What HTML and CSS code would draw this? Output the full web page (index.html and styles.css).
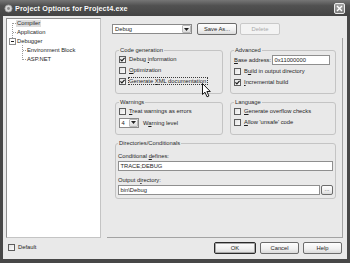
FILE: index.html
```html
<!DOCTYPE html>
<html>
<head>
<meta charset="utf-8">
<title>Project Options for Project4.exe</title>
<link rel="stylesheet" href="styles.css">
</head>
<body>
<div class="window">
  <div class="titlebar">
    <svg class="app-icon" width="9" height="9" viewBox="0 0 9 9"><circle cx="4.5" cy="4.5" r="3.6" fill="#d6d6d6" stroke="#9a9a9a" stroke-width="0.8"/><circle cx="4.5" cy="4.5" r="1.4" fill="#8a8a8a"/></svg>
    <span class="title">Project Options for Project4.exe</span>
    <div class="close"><svg width="7" height="7" viewBox="0 0 7 7"><path d="M1 1 L6 6 M6 1 L1 6" stroke="#fff" stroke-width="1.4"/></svg></div>
  </div>
  <div class="client">
    <div class="main">
      <div class="tree">
        <div class="tree-body">
          <svg class="tree-lines" width="30" height="45" viewBox="0 0 30 45" shape-rendering="crispEdges">
            <g stroke="#9c9c9c" stroke-width="1" stroke-dasharray="1 1" fill="none">
              <line x1="5.5" y1="4" x2="5.5" y2="19"/>
              <line x1="6" y1="4.5" x2="10" y2="4.5"/>
              <line x1="6" y1="13.5" x2="10" y2="13.5"/>
              <line x1="15.5" y1="26" x2="15.5" y2="41"/>
              <line x1="16" y1="31.5" x2="20" y2="31.5"/>
              <line x1="16" y1="40.5" x2="20" y2="40.5"/>
            </g>
            <rect x="2.5" y="19.5" width="6" height="6" fill="#fff" stroke="#8c8c8c"/>
            <line x1="4" y1="22.5" x2="7" y2="22.5" stroke="#222"/>
          </svg>
          <div class="tree-items">
            <div class="node"><span class="lbl sel">Compiler</span></div>
            <div class="node"><span class="lbl">Application</span></div>
            <div class="node"><span class="lbl">Debugger</span></div>
            <div class="node child"><span class="lbl">Environment Block</span></div>
            <div class="node child"><span class="lbl">ASP.NET</span></div>
          </div>
        </div>
      </div>
      <div class="right">
        <div class="toolbar">
          <div class="combo config"><span class="combo-text">Debug</span><span class="drop"><svg width="5" height="3" viewBox="0 0 5 3"><path d="M0 0 H5 L2.5 3 Z" fill="#222"/></svg></span></div>
          <button class="btn save">Save As...</button>
          <button class="btn delete" disabled>Delete</button>
        </div>
        <div class="panel">
          <div class="groups">
            <fieldset class="group codegen">
              <legend>Code generation</legend>
              <div class="chk-row"><span class="chk on"><svg width="5" height="5" viewBox="0 0 5 5"><path d="M0.4 2.4 L1.9 3.9 L4.6 0.8" stroke="#1a1a1a" stroke-width="1.2" fill="none"/></svg></span><span>Debug <u>i</u>nformation</span></div>
              <div class="chk-row"><span class="chk"></span><span><u>O</u>ptimization</span></div>
              <div class="chk-row"><span class="chk on"><svg width="5" height="5" viewBox="0 0 5 5"><path d="M0.4 2.4 L1.9 3.9 L4.6 0.8" stroke="#1a1a1a" stroke-width="1.2" fill="none"/></svg></span><span class="focus">Generate <u>X</u>ML documentation</span></div>
            </fieldset>
            <fieldset class="group advanced">
              <legend>Advanced</legend>
              <div class="field-row"><span><u>B</u>ase address:</span><span class="textbox base">0x11000000</span></div>
              <div class="chk-row"><span class="chk"></span><span>B<u>u</u>ild in output directory</span></div>
              <div class="chk-row"><span class="chk on"><svg width="5" height="5" viewBox="0 0 5 5"><path d="M0.4 2.4 L1.9 3.9 L4.6 0.8" stroke="#1a1a1a" stroke-width="1.2" fill="none"/></svg></span><span><u>I</u>ncremental build</span></div>
            </fieldset>
            <fieldset class="group warnings">
              <legend>Warnings</legend>
              <div class="chk-row"><span class="chk"></span><span><u>T</u>reat warnings as errors</span></div>
              <div class="field-row level"><div class="combo small"><span class="combo-text">4</span><span class="drop"><svg width="5" height="3" viewBox="0 0 5 3"><path d="M0 0 H5 L2.5 3 Z" fill="#222"/></svg></span></div><span>W<u>a</u>rning level</span></div>
            </fieldset>
            <fieldset class="group language">
              <legend>Language</legend>
              <div class="chk-row"><span class="chk"></span><span><u>G</u>enerate overflow checks</span></div>
              <div class="chk-row"><span class="chk"></span><span><u>A</u>llow 'unsafe' code</span></div>
            </fieldset>
            <fieldset class="group dirs">
              <legend>Directories/Conditionals</legend>
              <div class="lbl-line">Conditional <u>d</u>efines:</div>
              <div class="textbox wide">TRACE;DEBUG</div>
              <div class="lbl-line second">Output d<u>i</u>rectory:</div>
              <div class="path-row"><div class="textbox path">bin\Debug</div><button class="btn browse">...</button></div>
            </fieldset>
          </div>
        </div>
      </div>
    </div>
    <div class="footer">
      <div class="chk-row default"><span class="chk"></span><span>Default</span></div>
      <div class="actions">
        <button class="btn ok">OK</button>
        <button class="btn">Cancel</button>
        <button class="btn">Help</button>
      </div>
    </div>
  </div>
  <svg class="cursor" width="10" height="15" viewBox="0 0 10 15"><path d="M0.5 0.5 L0.5 11.5 L3 9.2 L5 13.8 L6.9 13 L4.9 8.5 L8.3 8.5 Z" fill="#fff" stroke="#000" stroke-width="0.9" stroke-linejoin="round"/></svg>
</div>
</body>
</html>
```

FILE: styles.css
```css
* { box-sizing: border-box; }
html, body { margin: 0; padding: 0; }
body {
  width: 350px;
  height: 263px;
  overflow: hidden;
  font-family: "Liberation Sans", Arial, sans-serif;
  font-size: 5.8px;
  color: #1e1e1e;
  background: #fff;
}
u { text-decoration-thickness: 0.6px; text-underline-offset: 0.8px; }

.window {
  position: relative;
  width: 350px;
  height: 263px;
  display: flex;
  flex-direction: column;
  background: #474747;
}

.titlebar {
  height: 16px;
  flex: none;
  display: flex;
  align-items: center;
  padding: 0 5px 0 4px;
  background: linear-gradient(#767676, #515151 35%, #484848 80%, #434343);
  color: #fff;
}
.app-icon { flex: none; margin-right: 2px; }
.title {
  flex: 1;
  font-weight: bold;
  font-size: 7.3px;
  letter-spacing: 0.05px;
  text-shadow: 0 0 0.5px #222;
}
.close {
  width: 11px;
  height: 11px;
  border: 1px solid #ececec;
  border-radius: 2px;
  background: linear-gradient(#a2a2a2, #7e7e7e);
  display: flex;
  align-items: center;
  justify-content: center;
}

.client {
  flex: 1;
  margin: 0 3px 4px 3px;
  background: #e9e9e9;
  display: flex;
  flex-direction: column;
}

.main {
  height: 222px;
  flex: none;
  display: flex;
  gap: 6px;
  padding: 2px 0 0 3px;
}

/* tree */
.tree {
  width: 95px;
  height: 220px;
  background: #fff;
  border: 1px solid #8f8f8f;
  border-right-color: #c4c4c4;
  border-bottom-color: #c4c4c4;
}
.tree-body {
  display: grid;
}
.tree-lines, .tree-items { grid-area: 1 / 1; }
.tree-items { display: flex; flex-direction: column; }
.node {
  height: 9px;
  display: flex;
  align-items: center;
  padding-left: 9px;
}
.node.child { padding-left: 19px; }
.lbl {
  padding: 0 1px;
  line-height: 7px;
  white-space: nowrap;
}
.lbl.sel { background: #dedede; }

/* right */
.right {
  width: 236px;
  display: flex;
  flex-direction: column;
}
.toolbar {
  height: 12px;
  margin-top: 5px;
  padding-left: 5px;
  display: flex;
  align-items: center;
}
.combo {
  height: 10px;
  background: #fff;
  border: 1px solid #8a8a8a;
  display: flex;
  align-items: center;
  justify-content: space-between;
}
.combo.config { width: 80px; margin-right: 5px; }
.combo-text { padding-left: 2px; }
.drop {
  width: 9px;
  height: 8px;
  margin-right: 0;
  border: 1px solid #b9b9b9;
  border-radius: 1px;
  background: linear-gradient(#fbfbfb, #dcdcdc);
  display: flex;
  align-items: center;
  justify-content: center;
}

.btn {
  height: 12px;
  padding: 0;
  font-family: "Liberation Sans", Arial, sans-serif;
  font-size: 5.8px;
  color: #1e1e1e;
  border: 1px solid #6c6c6c;
  border-radius: 2px;
  background: linear-gradient(#fefefe, #f0f0f0 60%, #dadada);
}
.btn.save { width: 40px; margin-right: 3px; }
.btn.delete {
  width: 40px;
  color: #a9a9a9;
  border-color: #c9c9c9;
  background: #f3f3f3;
}

.panel {
  flex: 1;
  margin-top: 3px;
  padding: 8.5px 6px 0 8px;
  border-right: 1px solid #a3a3a3;
  border-bottom: 1px solid #a3a3a3;
}
.groups {
  display: grid;
  grid-template-columns: 108px 106px;
  column-gap: 7px;
  row-gap: 5px;
}

.group {
  margin: 0;
  min-width: 0;
  padding: 0 3px 5px 3px;
  border: 1px solid #c4c4c4;
  border-radius: 3px;
}
.group legend {
  padding: 0 1px;
  margin-left: 0;
  line-height: 7px;
  color: #2a2a2a;
}
.group.dirs {
  grid-column: 1 / 3;
  padding: 0 1px 3px 2px;
}

.chk-row {
  height: 11px;
  display: flex;
  align-items: center;
  gap: 3px;
  white-space: nowrap;
}
.chk {
  flex: none;
  width: 7px;
  height: 7px;
  border: 1px solid #5c5c5c;
  background: linear-gradient(135deg, #e2e2e2, #fbfbfb);
  display: flex;
  align-items: center;
  justify-content: center;
}
.focus {
  outline: 1px dotted #3a3a3a;
  outline-offset: 0.5px;
  padding: 0 0.5px;
  margin-left: -0.5px;
}

.field-row {
  height: 12px;
  display: flex;
  align-items: center;
  justify-content: space-between;
  white-space: nowrap;
  padding-right: 2px;
}
.textbox {
  height: 10px;
  background: #fff;
  border: 1px solid #8f8f8f;
  display: flex;
  align-items: center;
  padding-left: 1.5px;
  white-space: nowrap;
}
.textbox.base { width: 58px; }

.field-row.level {
  justify-content: flex-start;
  gap: 4px;
}
.combo.small { width: 20px; }
.combo.small .combo-text { padding-left: 1.5px; }

.lbl-line {
  height: 10px;
  line-height: 10px;
  margin-top: 4px;
}
.textbox.wide { width: 215px; }
.path-row { display: flex; align-items: center; }
.textbox.path { width: 202px; }
.btn.browse {
  width: 12px;
  height: 10px;
  margin-left: 1px;
  line-height: 6px;
  padding-bottom: 2px;
}

/* footer */
.footer {
  flex: 1;
  display: flex;
  justify-content: space-between;
  align-items: flex-start;
  padding: 4px 5px 0 5px;
}
.chk-row.default { height: 9px; margin-top: 0.5px; }
.actions { display: flex; gap: 4px; }
.actions .btn { width: 39px; }
.actions .btn.ok {
  width: 42px;
  border-color: #2b2b2b;
  box-shadow: inset 0 0 0 1px #a8a8a8;
}

.cursor {
  position: absolute;
  left: 202px;
  top: 83px;
}
```
